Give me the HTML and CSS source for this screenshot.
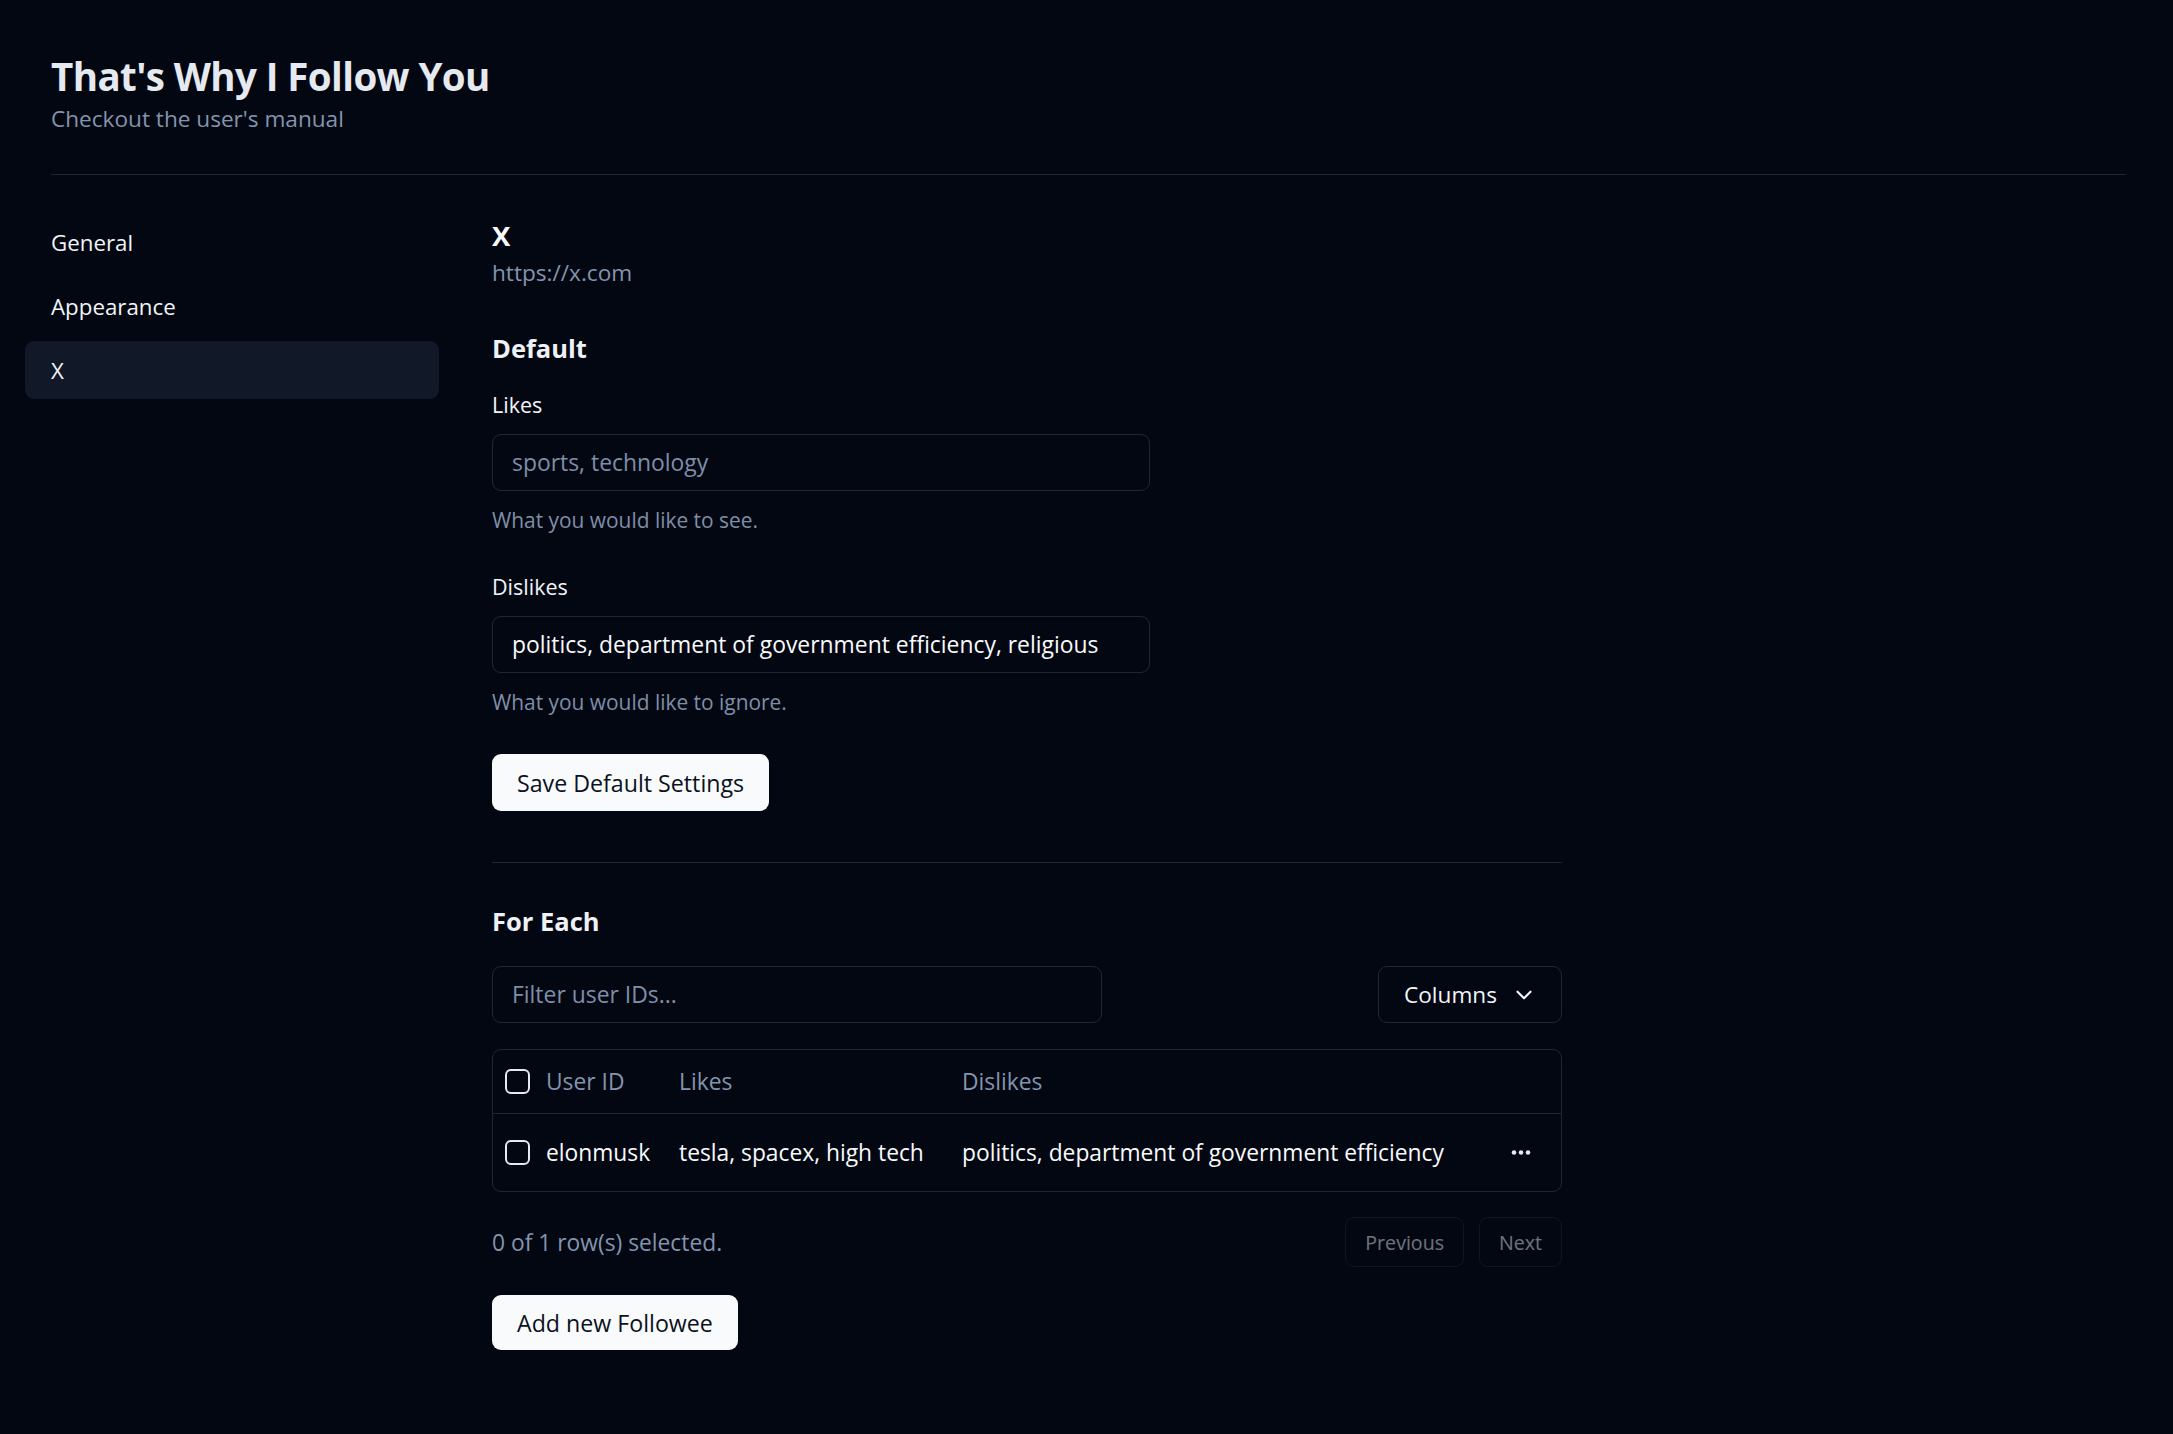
FILE: index.html
```html
<!DOCTYPE html>
<html lang="en">
<head>
<meta charset="utf-8">
<title>That's Why I Follow You</title>
<link rel="stylesheet" href="styles.css">
</head>
<body>
<div class="page">
  <header class="header">
    <h1 class="title">That's Why I Follow You</h1>
    <p class="subtitle">Checkout the user's manual</p>
  </header>
  <hr class="sep">
  <div class="layout">
    <aside class="sidebar">
      <nav class="nav">
        <a class="nav-link">General</a>
        <a class="nav-link">Appearance</a>
        <a class="nav-link active">X</a>
      </nav>
    </aside>
    <main class="content">
      <h2 class="site-name">X</h2>
      <p class="site-url">https://x.com</p>

      <h3 class="section-title default-title">Default</h3>
      <div class="field">
        <label class="label">Likes</label>
        <input class="input" type="text" placeholder="sports, technology">
        <p class="desc">What you would like to see.</p>
      </div>
      <div class="field field-2">
        <label class="label">Dislikes</label>
        <input class="input" type="text" value="politics, department of government efficiency, religious">
        <p class="desc">What you would like to ignore.</p>
      </div>
      <button class="btn-primary save-btn">Save Default Settings</button>

      <hr class="sep sep-content">

      <h3 class="section-title">For Each</h3>
      <div class="toolbar">
        <input class="input filter" type="text" placeholder="Filter user IDs...">
        <button class="btn-outline columns-btn">Columns
          <svg class="chev" viewBox="0 0 24 24" width="26" height="26" fill="none" stroke="currentColor" stroke-width="2" stroke-linecap="round" stroke-linejoin="round"><path d="m6 9 6 6 6-6"/></svg>
        </button>
      </div>

      <div class="table">
        <div class="trow thead">
          <div class="cell cb-cell"><span class="checkbox"></span></div>
          <div class="cell">User ID</div>
          <div class="cell">Likes</div>
          <div class="cell">Dislikes</div>
          <div class="cell"></div>
        </div>
        <div class="trow tbody">
          <div class="cell cb-cell"><span class="checkbox"></span></div>
          <div class="cell">elonmusk</div>
          <div class="cell">tesla, spacex, high tech</div>
          <div class="cell">politics, department of government efficiency</div>
          <div class="cell act-cell">
            <svg class="dots" viewBox="0 0 24 8" width="24" height="8"><circle cx="4" cy="4" r="2.6" fill="currentColor"/><circle cx="12" cy="4" r="2.6" fill="currentColor"/><circle cx="20" cy="4" r="2.6" fill="currentColor"/></svg>
          </div>
        </div>
      </div>

      <div class="footer-row">
        <span class="selected">0 of 1 row(s) selected.</span>
        <div class="pager">
          <button class="btn-outline pager-btn">Previous</button>
          <button class="btn-outline pager-btn">Next</button>
        </div>
      </div>

      <button class="btn-primary add-btn">Add new Followee</button>
    </main>
  </div>
</div>
</body>
</html>
```

FILE: styles.css
```css
* { box-sizing: border-box; }

html, body {
  margin: 0;
  background: #030712;
  color: #f1f5f9;
  font-family: "Open Sans", "Noto Sans", sans-serif;
}

.page {
  padding: 52px 47px 60px 51px;
}

.title {
  margin: 0;
  font-size: 38.5px;
  line-height: 49px;
  font-weight: 700;
  letter-spacing: -0.6px;
  color: #e5e9f0;
}

.subtitle {
  margin: 2px 0 0 0;
  font-size: 22.6px;
  line-height: 32px;
  color: #8494ad;
}

.sep {
  border: 0;
  height: 1px;
  background: #1e2533;
  margin: 39px 0 0 0;
}

.layout {
  display: flex;
  margin-top: 38px;
  gap: 53px;
}

.sidebar {
  flex: 0 0 414px;
  margin-left: -26px;
}

.nav {
  display: flex;
  flex-direction: column;
  gap: 6px;
}

.nav-link {
  display: flex;
  align-items: center;
  height: 58px;
  padding: 0 26px;
  border-radius: 9px;
  font-size: 22.3px;
  color: #f1f5f9;
}

.nav-link.active {
  background: #111827;
}

.content {
  flex: 1;
  max-width: 1070px;
}

.site-name {
  margin: 5px 0 0 0;
  font-size: 27.5px;
  line-height: 36px;
  font-weight: 700;
  color: #f8fafc;
}

.site-url {
  margin: 4px 0 0 0;
  font-size: 22.6px;
  line-height: 30px;
  color: #8494ad;
}

.section-title {
  margin: 0;
  font-size: 25.5px;
  line-height: 34px;
  font-weight: 700;
  color: #eef2f7;
}

.default-title {
  margin-top: 43px;
}

.field {
  display: flex;
  flex-direction: column;
  margin-top: 26px;
}

.field-2 {
  margin-top: 40px;
}

.label {
  font-size: 21.5px;
  line-height: 28px;
  color: #f1f5f9;
}

.input {
  height: 57px;
  margin-top: 15px;
  padding: 0 19px;
  border: 1px solid #1f2737;
  border-radius: 9px;
  background: transparent;
  color: #f8fafc;
  font-family: inherit;
  font-size: 22.9px;
  outline: none;
  width: 658px;
}

.input::placeholder {
  color: #7f8ea8;
}

.desc {
  margin: 16px 0 0 0;
  font-size: 20.9px;
  line-height: 26px;
  color: #7f8ea8;
}

.btn-primary {
  display: inline-flex;
  align-items: center;
  height: 57px;
  padding: 0 25px;
  border: 0;
  border-radius: 9px;
  background: #f8fafc;
  color: #0b1120;
  font-family: inherit;
  font-size: 23.2px;
}

.save-btn {
  margin-top: 39px;
}

.sep-content {
  margin: 51px 0 41px 0;
}

.toolbar {
  display: flex;
  justify-content: space-between;
  align-items: center;
  margin-top: 28px;
}

.toolbar .filter {
  margin-top: 0;
  width: 610px;
}

.btn-outline {
  display: inline-flex;
  align-items: center;
  justify-content: center;
  background: transparent;
  border: 1px solid #1f2737;
  border-radius: 9px;
  color: #f1f5f9;
  font-family: inherit;
}

.columns-btn {
  width: 184px;
  height: 57px;
  gap: 14px;
  font-size: 22.6px;
  justify-content: flex-start;
  padding: 0 0 0 25px;
}

.chev {
  display: block;
}

.table {
  margin-top: 26px;
  border: 1px solid #1f2737;
  border-radius: 9px;
}

.trow {
  display: grid;
  grid-template-columns: 53px 133px 283px 1fr 80px;
  align-items: center;
}

.thead {
  height: 64px;
  border-bottom: 1px solid #1f2737;
  color: #8494ad;
}

.tbody {
  height: 77px;
  color: #f8fafc;
}

.cell {
  font-size: 22.8px;
  white-space: nowrap;
}

.cb-cell {
  padding-left: 12px;
  display: flex;
  align-items: center;
}

.checkbox {
  display: block;
  width: 25px;
  height: 25px;
  border: 2px solid #e5e9f0;
  border-radius: 6px;
}

.act-cell {
  display: flex;
  justify-content: center;
  color: #e5e9f0;
}

.dots {
  display: block;
  width: 22px;
  height: 7px;
}

.footer-row {
  display: flex;
  justify-content: space-between;
  align-items: center;
  margin-top: 25px;
}

.selected {
  font-size: 22.8px;
  color: #8494ad;
}

.pager {
  display: flex;
  gap: 15px;
}

.pager-btn {
  height: 50px;
  padding: 0 19px;
  font-size: 19.6px;
  color: #f1f5f9;
  opacity: 0.45;
}

.add-btn {
  margin-top: 28px;
  height: 55px;
}
```
